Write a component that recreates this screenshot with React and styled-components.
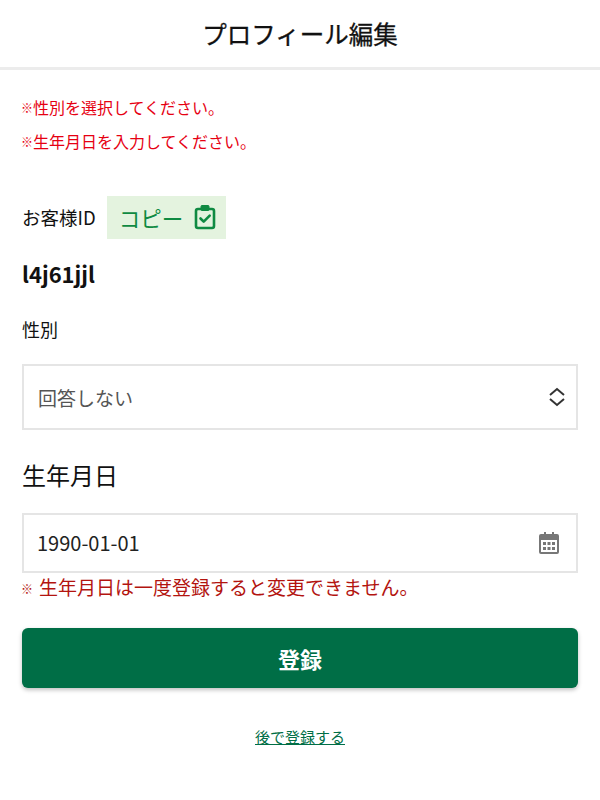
import React from 'react';
import styled, { createGlobalStyle } from 'styled-components';

const GlobalStyle = createGlobalStyle`
  html, body {
    margin: 0;
    padding: 0;
    background: #fff;
  }
  body {
    font-family: "Noto Sans CJK JP", "Noto Sans", sans-serif;
    color: #111;
  }
  * {
    box-sizing: border-box;
  }
`;

const Page = styled.div`
  width: 600px;
  height: 800px;
  overflow: hidden;
`;

const Header = styled.header`
  height: 70px;
  padding-top: 2px;
  display: flex;
  align-items: center;
  justify-content: center;
  border-bottom: 3px solid #ececec;
`;

const Title = styled.h1`
  margin: 0;
  font-size: 24.5px;
  line-height: 1;
  font-weight: 400;
  color: #111;
  -webkit-text-stroke: 0.3px #111;
`;

const Content = styled.main`
  padding: 20px 22px 0;
  display: flex;
  flex-direction: column;
`;

const ErrorLine = styled.p`
  margin: 0;
  height: 34px;
  font-size: 16px;
  line-height: 34px;
  color: #e60012;
  white-space: nowrap;
`;

const Mark = styled.span`
  display: inline-block;
  width: ${({ $width }) => $width}px;
  margin-left: -1px;
  font-size: 12px;
  font-weight: 700;
  vertical-align: 1px;
`;

const IdRow = styled.div`
  margin-top: 37px;
  display: flex;
  align-items: center;
  gap: 11px;
`;

const IdLabel = styled.span`
  font-size: 18.5px;
  line-height: 44px;
`;

const CopyButton = styled.button`
  width: 119px;
  height: 43px;
  padding: 0 0 0 12px;
  display: flex;
  align-items: center;
  gap: 10px;
  border: 0;
  background: #e4f3df;
  color: #0f8a42;
  font-family: inherit;
  font-size: 21.5px;
`;

const CustomerId = styled.div`
  margin-top: 17px;
  font-size: 22px;
  line-height: 34px;
  font-weight: 700;
`;

const Label = styled.div`
  margin-top: 26px;
  font-size: 18px;
  line-height: 26px;
`;

const SelectBox = styled.div`
  margin-top: 22px;
  height: 66px;
  padding: 0 10px 0 14px;
  display: flex;
  align-items: center;
  justify-content: space-between;
  border: 2px solid #e5e5e5;
  background: #fff;
  color: #555;
  font-size: 19px;
`;

const SectionTitle = styled.h2`
  margin: 27px 0 0;
  font-size: 24px;
  line-height: 36px;
  font-weight: 400;
`;

const DateBox = styled.div`
  margin-top: 20px;
  height: 60px;
  padding: 0 16px 0 13px;
  display: flex;
  align-items: center;
  justify-content: space-between;
  border: 2px solid #e5e5e5;
  background: #fff;
  color: #222;
  font-size: 20px;
`;

const DateValue = styled.span`
  padding-bottom: 2px;
`;

const Notice = styled.p`
  margin: 0;
  height: 30px;
  font-size: 19px;
  line-height: 28px;
  color: #b3140f;
  white-space: nowrap;
`;

const SubmitButton = styled.button`
  margin-top: 25px;
  height: 60px;
  width: 100%;
  border: 0;
  border-radius: 6px;
  background: #006e46;
  color: #fff;
  font-family: inherit;
  font-size: 22px;
  font-weight: 700;
  box-shadow: 0 2px 4px rgba(0, 0, 0, 0.25);
`;

const LaterLink = styled.a`
  margin-top: 37px;
  align-self: center;
  font-size: 15px;
  line-height: 24px;
  color: #006e46;
  text-decoration: underline;
`;

const ClipboardCheck = () => (
  <svg width="24" height="26" viewBox="0 0 24 26" fill="none" stroke="currentColor" strokeWidth="2.6">
    <rect x="3" y="5" width="18" height="19" rx="2" />
    <rect x="8" y="1.5" width="8" height="5" rx="1" fill="currentColor" strokeWidth="1" />
    <path d="M7.5 14.5l3.2 3.2 6-6" strokeLinecap="round" strokeLinejoin="round" />
  </svg>
);

const UpDownIcon = () => (
  <svg width="18" height="20" viewBox="0 0 18 20" fill="none" stroke="#333" strokeWidth="2">
    <path d="M2 8l7-6 7 6" />
    <path d="M2 12l7 6 7-6" />
  </svg>
);

const CalendarIcon = () => (
  <svg width="22" height="24" viewBox="0 0 22 24">
    <path fill="#777" d="M3 3h3V1h2v2h6V1h2v2h3a2 2 0 0 1 2 2v16a2 2 0 0 1-2 2H3a2 2 0 0 1-2-2V5a2 2 0 0 1 2-2z" />
    <rect x="3" y="9" width="16" height="12" fill="#fff" />
    <g fill="#777">
      <rect x="5" y="11" width="3" height="3" />
      <rect x="9.5" y="11" width="3" height="3" />
      <rect x="14" y="11" width="3" height="3" />
      <rect x="5" y="16" width="3" height="3" />
      <rect x="9.5" y="16" width="3" height="3" />
      <rect x="14" y="16" width="3" height="3" />
    </g>
  </svg>
);

export default function App() {
  return (
    <Page>
      <GlobalStyle />
      <Header>
        <Title>プロフィール編集</Title>
      </Header>
      <Content>
        <ErrorLine><Mark $width={12}>※</Mark>性別を選択してください。</ErrorLine>
        <ErrorLine><Mark $width={12}>※</Mark>生年月日を入力してください。</ErrorLine>
        <IdRow>
          <IdLabel>お客様ID</IdLabel>
          <CopyButton>
            コピー
            <ClipboardCheck />
          </CopyButton>
        </IdRow>
        <CustomerId>l4j61jjl</CustomerId>
        <Label>性別</Label>
        <SelectBox>
          回答しない
          <UpDownIcon />
        </SelectBox>
        <SectionTitle>生年月日</SectionTitle>
        <DateBox>
          <DateValue>1990-01-01</DateValue>
          <CalendarIcon />
        </DateBox>
        <Notice><Mark $width={18}>※</Mark>生年月日は一度登録すると変更できません。</Notice>
        <SubmitButton>登録</SubmitButton>
        <LaterLink href="#">後で登録する</LaterLink>
      </Content>
    </Page>
  );
}
